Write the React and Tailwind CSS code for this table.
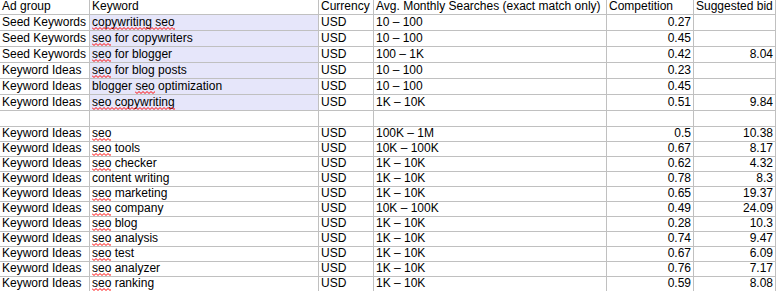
const seed = [
  ['Seed Keywords', [['copywriting seo', true]], '10 – 100', '0.27', ''],
  ['Seed Keywords', [['seo', true], [' for copywriters', false]], '10 – 100', '0.45', ''],
  ['Seed Keywords', [['seo', true], [' for blogger', false]], '100 – 1K', '0.42', '8.04'],
  ['Keyword Ideas', [['seo', true], [' for blog posts', false]], '10 – 100', '0.23', ''],
  ['Keyword Ideas', [['blogger ', false], ['seo', true], [' optimization', false]], '10 – 100', '0.45', ''],
  ['Keyword Ideas', [['seo copywriting', true]], '1K – 10K', '0.51', '9.84'],
]

const ideas = [
  ['seo', true, '', '100K – 1M', '0.5', '10.38'],
  ['seo', true, ' tools', '10K – 100K', '0.67', '8.17'],
  ['seo', true, ' checker', '1K – 10K', '0.62', '4.32'],
  ['content writing', false, '', '1K – 10K', '0.78', '8.3'],
  ['seo', true, ' marketing', '1K – 10K', '0.65', '19.37'],
  ['seo', true, ' company', '10K – 100K', '0.49', '24.09'],
  ['seo', true, ' blog', '1K – 10K', '0.28', '10.3'],
  ['seo', true, ' analysis', '1K – 10K', '0.74', '9.47'],
  ['seo', true, ' test', '1K – 10K', '0.67', '6.09'],
  ['seo', true, ' analyzer', '1K – 10K', '0.76', '7.17'],
  ['seo', true, ' ranking', '1K – 10K', '0.59', '8.08'],
]

// zigzag points for the spell-check squiggle
const zig = Array.from({ length: 60 }, (_, i) => `${i * 2},${i % 2 ? 2.5 : 0.5}`).join(' ')

const cell = 'border-r border-b border-[#c0c0c0] px-[2px] whitespace-nowrap'

function Row({ h, cells, kwBg, header }) {
  return (
    <>
      {cells.map((c, i) => (
        <div
          key={i}
          className={`${cell} ${h} ${i === 1 && kwBg ? 'bg-[#e6e6fa]' : ''} ${i >= 4 && !header ? 'text-right' : ''}`}
        >
          {c}
        </div>
      ))}
    </>
  )
}

function Squiggle({ children }) {
  return (
    <span className="relative">
      {children}
      <svg className="absolute left-0 top-[12px] w-full h-[3px]" preserveAspectRatio="none">
        <polyline points={zig} fill="none" stroke="#ff0000" strokeWidth="1" />
      </svg>
    </span>
  )
}

function Spelled({ parts }) {
  return parts.map(([t, bad], i) => (bad ? <Squiggle key={i}>{t}</Squiggle> : <span key={i}>{t}</span>))
}

export default function App() {
  return (
    <div
      className="w-[778px] h-[291px] bg-white text-black text-[12px] overflow-hidden"
      style={{ fontFamily: '"Liberation Sans", Arial, sans-serif' }}
    >
      <div className="grid grid-cols-[90px_229px_55px_233px_87px_82px]">
        <Row
          header
          h="h-[15px] leading-[12px]"
          cells={['Ad group', 'Keyword', 'Currency', 'Avg. Monthly Searches (exact match only)', 'Competition', 'Suggested bid']}
        />
        {seed.map((r, i) => (
          <Row
            key={i}
            kwBg
            h="h-[16px] leading-[15px]"
            cells={[r[0], <Spelled parts={r[1]} />, 'USD', r[2], r[3], r[4]]}
          />
        ))}
        <Row h="h-[16px] leading-[15px]" cells={['', '', '', '', '', '']} />
        {ideas.map((r, i) => (
          <Row
            key={i}
            h="h-[15px] leading-[12px]"
            cells={['Keyword Ideas', <Spelled parts={[[r[0], r[1]], [r[2], false]]} />, 'USD', r[3], r[4], r[5]]}
          />
        ))}
      </div>
    </div>
  )
}
